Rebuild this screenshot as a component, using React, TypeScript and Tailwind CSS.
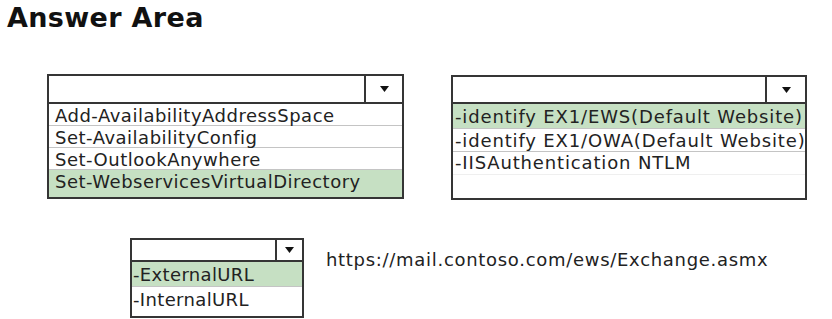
import React from "react";

const font = { fontFamily: '"DejaVu Sans", Verdana, sans-serif' };

function Arrow() {
  return (
    <svg width="9" height="6" viewBox="0 0 9 6">
      <polygon points="0,0 9,0 4.5,6" fill="#111" />
    </svg>
  );
}

export default function App() {
  return (
    <div
      className="w-[832px] h-[319px] bg-white text-[#222] overflow-hidden flex flex-col"
      style={font}
    >
      <div className="pl-[7px] pt-[1px] h-[40px] text-[27px] font-bold text-[#111] leading-[34px] tracking-[0.35px]">
        Answer Area
      </div>
      <div className="flex items-start mt-[34px]">
        {/* Box 1 */}
        <div className="ml-[47px] w-[357px] h-[125px] border-2 border-[#353535] flex flex-col">
          <div className="h-[28px] flex border-b-2 border-[#353535]">
            <div className="flex-1" />
            <div className="w-[38px] border-l-2 border-[#353535] flex items-center justify-center">
              <Arrow />
            </div>
          </div>
          <div className="h-[22px] border-b border-[#c4c4c4] pl-[6px] text-[18px] leading-[23px] tracking-[0.5px] whitespace-nowrap">
            Add-AvailabilityAddressSpace
          </div>
          <div className="h-[22px] border-b border-[#c4c4c4] pl-[6px] text-[18px] leading-[23px] tracking-[0.5px] whitespace-nowrap">
            Set-AvailabilityConfig
          </div>
          <div className="h-[22px] border-b border-[#c4c4c4] pl-[6px] text-[18px] leading-[23px] tracking-[0.5px] whitespace-nowrap">
            Set-OutlookAnywhere
          </div>
          <div className="flex-1 bg-[#c6e0c3] pl-[6px] text-[18px] leading-[23px] tracking-[0.5px] whitespace-nowrap">
            Set-WebservicesVirtualDirectory
          </div>
        </div>
        {/* Box 2 */}
        <div className="ml-[47px] mt-[1px] w-[356px] h-[125px] border-2 border-[#353535] flex flex-col">
          <div className="h-[27px] flex border-b-2 border-[#353535]">
            <div className="flex-1" />
            <div className="w-[40px] border-l-2 border-[#353535] flex items-center justify-center">
              <Arrow />
            </div>
          </div>
          <div className="h-[25px] border-b border-[#c4c4c4] bg-[#c6e0c3] pl-[2px] text-[18px] leading-[26px] tracking-[0.85px] whitespace-nowrap">
            -identify EX1/EWS(Default Website)
          </div>
          <div className="h-[23px] border-b border-[#c4c4c4] pl-[2px] text-[18px] leading-[23px] tracking-[0.85px] whitespace-nowrap">
            -identify EX1/OWA(Default Website)
          </div>
          <div className="h-[23px] border-b border-[#efefef] pl-[2px] text-[18px] leading-[22px] tracking-[0.85px] whitespace-nowrap">
            -IISAuthentication NTLM
          </div>
          <div className="flex-1" />
        </div>
      </div>
      <div className="flex items-start mt-[38px]">
        {/* Box 3 */}
        <div className="ml-[130px] w-[174px] h-[80px] border-2 border-[#353535] flex flex-col">
          <div className="h-[22px] flex border-b-2 border-[#353535]">
            <div className="flex-1" />
            <div className="w-[27px] border-l-2 border-[#353535] flex items-center justify-center">
              <Arrow />
            </div>
          </div>
          <div className="h-[25px] border-b border-[#c4c4c4] bg-[#c6e0c3] pl-[1px] text-[18px] leading-[25px] tracking-[0.35px] whitespace-nowrap">
            -ExternalURL
          </div>
          <div className="flex-1 pl-[1px] text-[18px] leading-[26px] tracking-[0.35px] whitespace-nowrap">
            -InternalURL
          </div>
        </div>
        <div className="ml-[22px] mt-[11px] text-[18px] leading-[22px] tracking-[0.7px] whitespace-nowrap">
          https://mail.contoso.com/ews/Exchange.asmx
        </div>
      </div>
    </div>
  );
}
